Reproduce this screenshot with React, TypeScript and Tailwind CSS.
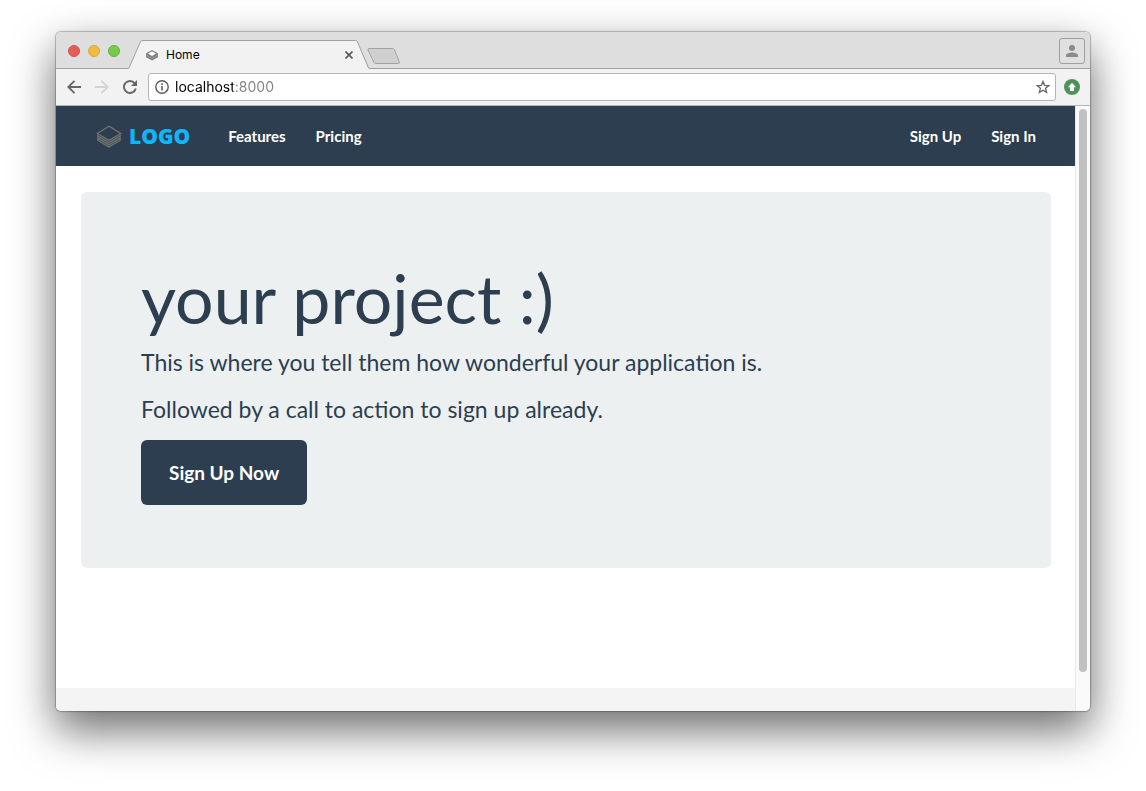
import React from 'react';

function TabFavicon() {
  return (
    <svg viewBox="0 0 16 16" className="size-4 shrink-0" aria-hidden="true">
      <path d="M8 3 14 6.200v4L8 13.500 2 10.200v-4Z" fill="#808284" />
      <path d="M8 4.200 12 6.500 8 9 4 6.500Z" fill="#fff" />
      <path d="m2 8 6 3.400L14 8" fill="none" stroke="#a5a7a9" strokeWidth=".6" />
    </svg>
  );
}

function BrandIcon() {
  return (
    <svg viewBox="0 0 26 23" className="h-[23px] w-[26px] shrink-0" fill="none" stroke="#6f7172" strokeWidth="1.400" aria-hidden="true">
      <path d="M13 1.200 24.800 8.500 13 15.400 1.200 8.500Z" />
      <path d="M1.200 10.700 13 17.700l11.800-7M1.200 12.900 13 19.900l11.800-7M1.200 15 13 22l11.800-7" />
      <path d="m1.200 8.500 1.800 1.100-1.800 1.100L3 11.800l-1.800 1.100L3 14l-1.800 1M24.800 8.500 23 9.600l1.800 1.100-1.800 1.100 1.800 1.100L23 14l1.800 1" strokeWidth=".8" />
    </svg>
  );
}

function TabStrip() {
  return (
    <div className="flex h-[37px] items-end border-b border-[#a0a0a0] bg-[#dedede]">
      <div className="flex items-center gap-2 self-center pt-0.5 pl-3">
        <button type="button" aria-label="Close window" className="size-3 rounded-full border border-[#d3504b] bg-[#e2605a]" />
        <button type="button" aria-label="Minimize window" className="size-3 rounded-full border border-[#dba73a] bg-[#efbc41]" />
        <button type="button" aria-label="Zoom window" className="size-3 rounded-full border border-[#63b23f] bg-[#77cc4b]" />
      </div>
      <div className="relative -mb-px ml-2 flex h-[29px] w-[243px] shrink-0 items-center pr-3.5 pl-4">
        <svg viewBox="0 0 243 29" className="absolute inset-0 h-full w-full" aria-hidden="true">
          <path d="M0 28.500h1L12.300 2Q13 .5 14.500.5h213q1.500 0 2 1.500l11 26.500h2V29H0Z" fill="#f2f2f2" />
          <path d="M0 28.500Q.8 28.500 1.200 27.500L12.300 2Q13 .5 14.500.5h213q1.500 0 2 1.500l10.700 25.200q.5 1.300 2 1.300h1" fill="none" stroke="#a0a0a0" />
        </svg>
        <div className="relative flex w-full items-center">
          <TabFavicon />
          <span className="ml-1.5 flex-1 text-[12px] leading-4 text-black">Home</span>
          <button type="button" aria-label="Close tab" className="flex size-4 items-center justify-center">
            <svg viewBox="0 0 8 8" className="size-2" stroke="#5a5a5a" strokeWidth="1.700" aria-hidden="true">
              <path d="m.5.5 7 7m0-7-7 7" />
            </svg>
          </button>
        </div>
      </div>
      <button type="button" aria-label="New tab" className="-ml-1 mb-1">
        <svg viewBox="0 0 33 16" className="block h-4 w-[33px]" aria-hidden="true">
          <path d="M2 .5h23.500q1.500 0 2 1.200l4.700 12q.7 1.800-1 1.800H9q-1.600 0-2.300-1.500L1 2Q.4.5 2 .5Z" fill="#d0d0d0" stroke="#a3a3a3" />
        </svg>
      </button>
      <button type="button" aria-label="Profile" className="mr-[5px] mb-1 ml-auto flex size-[26px] items-center justify-center rounded-[3px] border border-[#a0a0a0] bg-[#e0e0e0]">
        <svg viewBox="0 0 12 12" className="size-3" fill="#8a8a8a" aria-hidden="true">
          <circle cx="6" cy="3" r="3" />
          <path d="M0 12v-1.500C0 8.500 3.500 7.500 6 7.500s6 1 6 3V12Z" />
        </svg>
      </button>
    </div>
  );
}

function AddressBar() {
  return (
    <div className="flex h-[37px] items-center border-b border-[#b4b4b4] bg-[#f2f2f2] pr-[10px] pl-2">
      <button type="button" aria-label="Back" className="flex size-5 items-center justify-center">
        <svg viewBox="0 0 14 14" className="size-3.5" fill="none" stroke="#666" strokeWidth="1.900" aria-hidden="true">
          <path d="M14 7H1.400M7.500.8 1.300 7l6.200 6.200" />
        </svg>
      </button>
      <button type="button" aria-label="Forward" className="ml-2 flex size-5 items-center justify-center">
        <svg viewBox="0 0 14 14" className="size-3.5" fill="none" stroke="#d3d3d3" strokeWidth="1.900" aria-hidden="true">
          <path d="M0 7h12.600M6.500.8 12.700 7l-6.200 6.200" />
        </svg>
      </button>
      <button type="button" aria-label="Reload" className="ml-2 flex size-5 items-center justify-center">
        <svg viewBox="0 0 14 14" className="size-3.5" aria-hidden="true">
          <path d="M11.700 3.300A6 6 0 1 0 12.800 8.500" fill="none" stroke="#666" strokeWidth="1.900" />
          <path d="M14 0v6H8Z" fill="#666" />
        </svg>
      </button>
      <div className="ml-2 flex h-7 flex-1 items-center rounded-[3px] border border-[#b4b4b4] bg-white px-1.5">
        <svg viewBox="0 0 14 14" className="size-3.5 shrink-0" aria-hidden="true">
          <circle cx="7" cy="7" r="6.200" fill="none" stroke="#5a5a5a" strokeWidth="1.400" />
          <path d="M6.200 6h1.600v4.500H6.200ZM6.200 3.300h1.600v1.600H6.200Z" fill="#5a5a5a" />
        </svg>
        <input
          type="text"
          aria-label="Address"
          defaultValue="localhost:8000"
          className="ml-1.5 min-w-0 flex-1 bg-[linear-gradient(90deg,#000_58px,#808080_58px)] bg-clip-text text-[14px] leading-5 text-transparent outline-none"
        />
        <button type="button" aria-label="Bookmark this page" className="-mr-0.5 flex size-4 items-center justify-center">
          <svg viewBox="0 0 14 14" className="size-3.5" fill="none" stroke="#666" strokeWidth="1.300" aria-hidden="true">
            <path d="m7 1.400 1.600 3.900 4.200.3-3.200 2.700 1 4.100L7 10.200l-3.600 2.200 1-4.100-3.200-2.700 4.200-.3Z" />
          </svg>
        </button>
      </div>
      <button type="button" aria-label="Update available" className="ml-2 size-4">
        <svg viewBox="0 0 16 16" className="size-4" aria-hidden="true">
          <circle cx="8" cy="8" r="8" fill="#4e935a" />
          <path d="m8 3.800 4 4.400h-2V12H6V8.200H4Z" fill="#fff" />
        </svg>
      </button>
    </div>
  );
}

function NavLink({ children }: { children: React.ReactNode }) {
  return (
    <a href="#" className="px-[15px] text-[15px] leading-5 font-bold text-white">
      {children}
    </a>
  );
}

function SitePage() {
  return (
    <div className="flex min-w-0 flex-1 flex-col bg-[#f4f4f4] font-[Lato,sans-serif] text-[#2c3e50]">
      <header className="bg-[#2c3e50] pr-6 pl-[25px]">
        <nav className="flex h-[60px] items-center">
          <a href="#" className="flex items-center gap-[7px] pr-[15px] pl-[15px] font-['Open_Sans',sans-serif] text-[21px] leading-6 font-extrabold text-[#12b5f8]">
            <BrandIcon />
            LOGO
          </a>
          <div className="ml-2 flex flex-1">
            <NavLink>Features</NavLink>
            <NavLink>Pricing</NavLink>
          </div>
          <NavLink>Sign Up</NavLink>
          <NavLink>Sign In</NavLink>
        </nav>
      </header>
      <main className="mb-[23px] flex-1 bg-white pt-[26px] pr-6 pl-[25px]">
        <section className="rounded-md bg-[#ecf0f1] px-[60px] pt-[69px] pb-[63px]">
          <h1 className="text-[68px] leading-[74px]">your project :)</h1>
          <p className="mt-[11px] text-[23px] leading-8">This is where you tell them how wonderful your application is.</p>
          <p className="mt-[15px] text-[23px] leading-8">Followed by a call to action to sign up already.</p>
          <a href="#" className="mt-[15px] inline-block rounded-md bg-[#2c3e50] px-7 py-5 text-[19px] leading-[25px] font-bold text-white">
            Sign Up Now
          </a>
        </section>
      </main>
    </div>
  );
}

export default function App() {
  return (
    <div className="flex min-h-screen bg-white px-14 pt-8 pb-20 font-[Inter,sans-serif]">
      <div className="flex min-w-0 flex-1 flex-col overflow-hidden rounded-[5px] shadow-[0_0_1px_1px_rgba(0,0,0,0.25),0_20px_44px_rgba(0,0,0,0.5),0_10px_40px_rgba(0,0,0,0.12)]">
        <TabStrip />
        <AddressBar />
        <div className="flex flex-1">
          <SitePage />
          <div className="w-[15px] border-l border-[#e8e8e8] bg-[#fafafa] px-[3px] pt-[3px] pb-[39px]">
            <div className="h-full w-2 rounded-full bg-[#c1c1c1]" />
          </div>
        </div>
      </div>
    </div>
  );
}
